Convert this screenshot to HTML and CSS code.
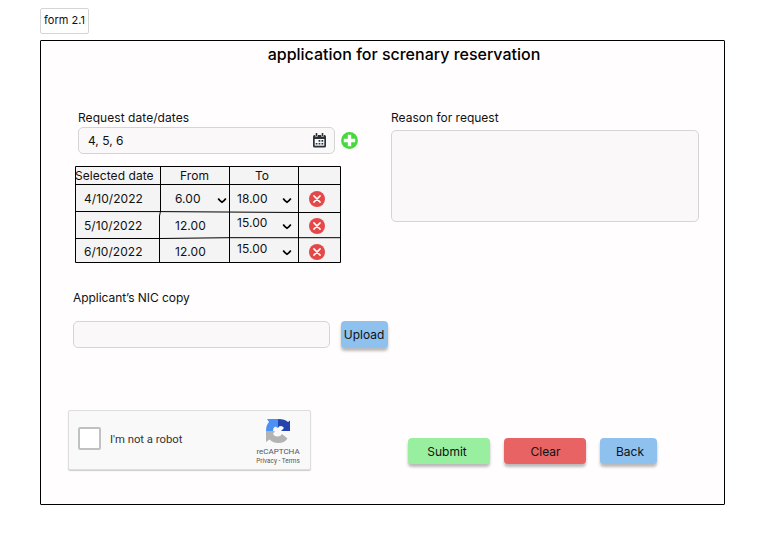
FILE: index.html
```html
<!DOCTYPE html>
<html lang="en">
<head>
<meta charset="utf-8">
<title>Application for screnary reservation</title>
<link rel="stylesheet" href="styles.css">
</head>
<body>
<svg width="0" height="0" class="defs">
  <symbol id="chev" viewBox="0 0 10 7"><path d="M1.2 1.500Q3 4.200 5 5.200 7 4.200 8.800 1.500" fill="none" stroke="#000" stroke-width="1.700"/></symbol>
  <symbol id="del" viewBox="0 0 16 16"><circle cx="8" cy="8" r="8" fill="#e54848"/><path d="M4.900 4.900l6.200 6.200M11.100 4.900l-6.200 6.200" stroke="#fff" stroke-width="1.500" stroke-linecap="round"/></symbol>
</svg>
<div class="tag">form 2.1</div>
<main class="frame">
  <h1>application for screnary reservation</h1>
  <div class="columns">
    <section class="left">
      <label class="lbl-date">Request date/dates</label>
      <div class="date-row">
        <div class="field date-field"><span>4, 5, 6</span>
          <svg width="13" height="15" viewBox="0 0 13 15"><path d="M1.500 2h10Q13 2 13 3.500v9.500Q13 14.500 11.500 14.500h-10Q0 14.500 0 13V3.500Q0 2 1.500 2z" fill="#2c3238"/><path d="M1.700 6h9.600v6.700H1.700z" fill="#f9f8f9"/><path d="M2.200 0h2.600v3.600H2.200zM8.200 0h2.600v3.600H8.200z" fill="#f9f8f9"/><path d="M2.700 0h1.600v3H2.700zM8.700 0h1.600v3H8.700zM5.600 7h1.700v1.800H5.600zM8.500 7h1.700v1.800H8.500zM2.700 10h1.700v1.600H2.700zM5.600 10h1.700v1.600H5.600zM8.500 10h1.700v1.600H8.500z" fill="#2c3238"/></svg>
        </div>
        <svg width="17" height="17" viewBox="0 0 17 17"><circle cx="8.500" cy="8.500" r="8.400" fill="#46d83d"/><path d="M8.500 2.800v11.400M2.800 8.500h11.400" stroke="#fff" stroke-width="3.400"/></svg>
      </div>
      <div class="table">
        <div class="cell head-date">Selected date</div><div class="cell mid">From</div><div class="cell mid to">To</div><div class="cell"></div>
        <div class="cell date">4/10/2022</div><div class="cell from">6.00<svg class="chev"><use href="#chev"/></svg></div><div class="cell till">18.00<svg class="chev"><use href="#chev"/></svg></div><div class="cell act"><svg><use href="#del"/></svg></div>
        <div class="cell date">5/10/2022</div><div class="cell from">12.00</div><div class="cell till raised"><span>15.00</span><svg class="chev"><use href="#chev"/></svg></div><div class="cell act"><svg><use href="#del"/></svg></div>
        <div class="cell date last">6/10/2022</div><div class="cell from last">12.00</div><div class="cell till raised last"><span>15.00</span><svg class="chev"><use href="#chev"/></svg></div><div class="cell act last"><svg><use href="#del"/></svg></div>
        <svg class="rules" width="266" height="97" viewBox="0 0 266 97"><path d="M.5.5h265v96H.5zM0 18.500h266M0 45.500 85 45.600 223 46.500H266M0 72.500 85 72.500 154 71.700H266M85.500 0V45L84.500 50V97M154.500 0V97M223.500 0V97" fill="none" stroke="#000"/></svg>
      </div>
      <label class="lbl-nic">Applicant’s NIC copy</label>
      <div class="nic-row"><div class="field nic-field"></div><button class="btn blue upload">Upload</button></div>
    </section>
    <section class="right">
      <label>Reason for request</label>
      <div class="field reason"></div>
    </section>
  </div>
  <footer>
    <div class="captcha">
      <span class="check"></span><span class="robot">I'm not a robot</span>
      <div class="brand">
        <svg width="26" height="26" viewBox="0 0 26 26"><path d="M13 1Q20 1 23 4l2-1.500V13H16l3-3Q17 7 14 8.500L13 10z" fill="#2444ad"/><path d="M13 1v9L10 8.500Q8 9.500 8 13H1Q1 7 4 4L2 1z" fill="#4b91f3"/><path d="M1 13h9l-2 3q2 3 5 2.500 3-.5 4-2.500l5.500 4.500Q19.500 25 13.500 25 8 25 4.500 21.500L1 24z" fill="#b3b3b3"/></svg>
        <span class="name">reCAPTCHA</span><span class="legal">Privacy - Terms</span>
      </div>
    </div>
    <div class="actions"><button class="btn green">Submit</button><button class="btn red">Clear</button><button class="btn blue back">Back</button></div>
  </footer>
</main>
</body>
</html>
```
FILE: styles.css
```css
* { box-sizing: border-box; }
body { margin: 0; padding: 8px 40px 0; width: 765px; height: 545px; overflow: hidden; background: #fff; font: 12px/16px Inter, "Liberation Sans", sans-serif; color: #111; }
svg { display: block; flex: none; }
.defs { position: absolute; }
.tag { width: 49px; height: 26px; border: 1px solid #d5d5d5; border-radius: 2px; font-size: 11px; line-height: 23px; text-align: center; white-space: nowrap; }
.frame { margin-top: 6px; width: 685px; height: 465px; border: 1px solid #000; border-radius: 1px; background: #fffdfe; display: flex; flex-direction: column; }
h1 { margin: 3px 0 0; padding-left: 43px; height: 20px; font-size: 16px; line-height: 21px; font-weight: 500; text-align: center; color: #000; white-space: nowrap; }
.columns { display: flex; height: 346px; padding-top: 46px; }
.left { width: 350px; padding-left: 32px; }
label { display: block; height: 16px; white-space: nowrap; }
.lbl-date { margin-left: 5px; letter-spacing: .06px; }
.field { border: 1px solid #d6d5d6; border-radius: 5px; background: #faf8f9; }
.date-row { display: flex; align-items: center; gap: 6px; margin: 1px 0 0 5px; }
.date-field { width: 257px; height: 27px; padding: 0 8px 0 9px; display: flex; align-items: center; justify-content: space-between; }
.table { position: relative; width: 266px; height: 97px; margin: 12px 0 0 2px; display: grid; grid-template-columns: 85px 69px 69px 43px; grid-template-rows: 19px 28px 26px 24px; background: #f4f4f4; letter-spacing: .06px; }
.rules { position: absolute; inset: 0; }
.cell { display: flex; align-items: center; white-space: nowrap; }
.last { padding-top: 1px; }
.mid { justify-content: center; }
.to { padding-right: 3px; }
.date { padding-left: 9px; }
.from { padding-left: 15px; padding-right: 2px; justify-content: space-between; }
.till { padding-left: 8px; padding-right: 6px; justify-content: space-between; }
.chev { width: 10px; height: 7px; margin-top: 3px; }
.raised .chev { margin-top: 1px; }
.raised span { margin-top: -6px; }
.act { padding-left: 11px; }
.act svg { width: 16px; height: 16px; }
.lbl-nic { margin-top: 27px; letter-spacing: -.05px; }
.nic-row { display: flex; gap: 11px; margin-top: 15px; }
.nic-field { width: 257px; height: 27px; }
.btn { border: 0; padding: 1px 0 0; height: 26px; border-radius: 4px; font: inherit; color: #111; box-shadow: 0 3px 3px rgba(0,0,0,.27); }
.upload { width: 47px; height: 27px; padding: 0 1px 0 0; }
.blue { background: #8fc1ef; }
.green { width: 82px; padding-right: 4px; background: #98ef9f; }
.red { width: 82px; padding-left: 1px; background: #e86464; }
.back { width: 57px; padding-left: 3px; }
.reason { width: 308px; height: 92px; margin-top: 4px; }
footer { display: flex; padding-left: 27px; align-items: flex-start; }
.captcha { width: 243px; height: 60px; display: flex; align-items: center; padding: 0 9px; background: #f9f9f9; border: 1px solid #dedede; border-radius: 2px; box-shadow: 0 1px 1px #ccc; font-family: Roboto, sans-serif; color: #333; }
.check { width: 23px; height: 23px; margin-top: -3px; border: 2px solid #c1c1c1; border-radius: 2px; background: #fff; }
.robot { margin: 0 0 0 9px; font-size: 11.300px; }
.brand { margin: 3px 0 0 auto; width: 46px; display: flex; flex-direction: column; align-items: center; color: #555; white-space: nowrap; }
.name { font-size: 8px; line-height: 10px; margin-top: 3px; }
.legal { font-size: 6.400px; line-height: 9px; }
.actions { display: flex; gap: 14px; margin: 28px 0 0 97px; }
```
